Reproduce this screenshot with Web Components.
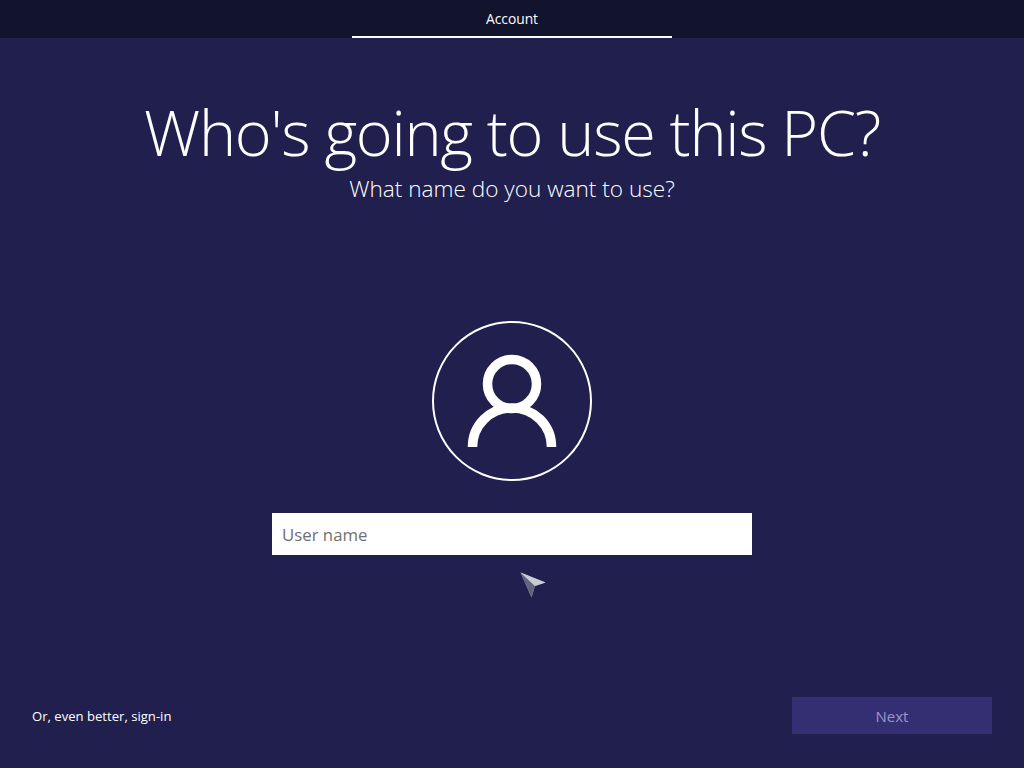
<!DOCTYPE html>
<html lang="en">
<head>
<meta charset="utf-8">
<title>Account</title>
<style>
  html, body { margin: 0; height: 100%; }
  body { background: #201f4e; font-family: "Open Sans", "Noto Sans", sans-serif; }
</style>
</head>
<body>
<oobe-page>
  <oobe-tabs slot="top" label="Account"></oobe-tabs>
  <span slot="title">Who's going to use this PC?</span>
  <span slot="subtitle">What name do you want to use?</span>
  <user-avatar slot="avatar"></user-avatar>
  <name-field slot="field" placeholder="User name"></name-field>
  <span slot="link">Or, even better, sign-in</span>
  <next-button slot="action">Next</next-button>
</oobe-page>

<script>
class OobePage extends HTMLElement {
  constructor() {
    super();
    this.attachShadow({ mode: "open" });
    this.shadowRoot.innerHTML = `
      <style>
        :host {
          display: flex;
          flex-direction: column;
          position: relative;
          width: 1024px;
          height: 768px;
          overflow: hidden;
          color: #fff;
          background: #201f4e;
        }
        .head { text-align: center; padding-top: 51px; }
        h1 {
          margin: 0;
          font-size: 63px;
          line-height: 86px;
          font-weight: 300;
          letter-spacing: -1.3px;
        }
        p {
          margin: 0;
          font-size: 22.6px;
          line-height: 32px;
          font-weight: 300;
          margin-top: -2px;
        }
        .middle {
          flex: 1;
          display: flex;
          flex-direction: column;
          align-items: center;
          gap: 32px;
          padding-top: 116px;
        }
        .foot {
          display: flex;
          align-items: center;
          justify-content: space-between;
          padding: 0 32px 34px;
          font-size: 13.1px;
        }
        .cursor { position: absolute; left: 519px; top: 571px; }
      </style>
      <slot name="top"></slot>
      <div class="head">
        <h1><slot name="title"></slot></h1>
        <p><slot name="subtitle"></slot></p>
      </div>
      <div class="middle">
        <slot name="avatar"></slot>
        <slot name="field"></slot>
      </div>
      <div class="foot">
        <slot name="link"></slot>
        <slot name="action"></slot>
      </div>
      <svg class="cursor" width="28" height="28" viewBox="0 0 28 28">
        <path d="M1.5 1.5 L26.5 11.5 L16 15 L12.500 26.5 Z" fill="#a3a4b8"/>
        <path d="M1.5 1.5 L16 15 L12.500 26.5 Z" fill="#62637f"/>
        <path d="M1.5 1.5 L26.5 11.5 L16 15 Z" fill="#c9cad6"/>
      </svg>
    `;
  }
}

class OobeTabs extends HTMLElement {
  constructor() {
    super();
    this.attachShadow({ mode: "open" });
  }
  connectedCallback() {
    this.shadowRoot.innerHTML = `
      <style>
        :host {
          display: flex;
          justify-content: center;
          height: 38px;
          background: #12132c;
        }
        .tab {
          box-sizing: border-box;
          width: 320px;
          height: 38px;
          border-bottom: 2px solid #fff;
          text-align: center;
          font-size: 13.8px;
          line-height: 37px;
          color: #fff;
        }
      </style>
      <div class="tab">${this.getAttribute("label")}</div>
    `;
  }
}

class UserAvatar extends HTMLElement {
  constructor() {
    super();
    this.attachShadow({ mode: "open" });
    this.shadowRoot.innerHTML = `
      <style>
        :host { display: block; width: 160px; height: 160px; }
        svg { display: block; }
      </style>
      <svg width="160" height="160" viewBox="0 0 160 160" fill="none" stroke="#fff">
        <circle cx="80" cy="80" r="79" stroke-width="2"/>
        <circle cx="80" cy="63" r="24.5" stroke-width="9.5"/>
        <path d="M40.5 126 C40.500 104 58 87 80 87 C102 87 119.500 104 119.500 126" stroke-width="9.5"/>
      </svg>
    `;
  }
}

class NameField extends HTMLElement {
  constructor() {
    super();
    this.attachShadow({ mode: "open" });
  }
  connectedCallback() {
    this.shadowRoot.innerHTML = `
      <style>
        :host {
          display: block;
          box-sizing: border-box;
          width: 480px;
          height: 42px;
          background: #fff;
        }
        input {
          box-sizing: border-box;
          display: block;
          width: 100%;
          height: 100%;
          border: 0;
          outline: 0;
          padding: 0 10px;
          background: transparent;
          font: 400 16.8px "Open Sans", "Noto Sans", sans-serif;
        }
        input::placeholder { color: #707070; opacity: 1; }
      </style>
      <input type="text" placeholder="${this.getAttribute("placeholder")}">
    `;
  }
}

class NextButton extends HTMLElement {
  constructor() {
    super();
    this.attachShadow({ mode: "open" });
    this.shadowRoot.innerHTML = `
      <style>
        :host {
          display: flex;
          align-items: center;
          justify-content: center;
          width: 200px;
          height: 37px;
          background: #342f73;
          color: #9a97c8;
          font-size: 15px;
        }
      </style>
      <slot></slot>
    `;
  }
}

customElements.define("oobe-page", OobePage);
customElements.define("oobe-tabs", OobeTabs);
customElements.define("user-avatar", UserAvatar);
customElements.define("name-field", NameField);
customElements.define("next-button", NextButton);
</script>
</body>
</html>
